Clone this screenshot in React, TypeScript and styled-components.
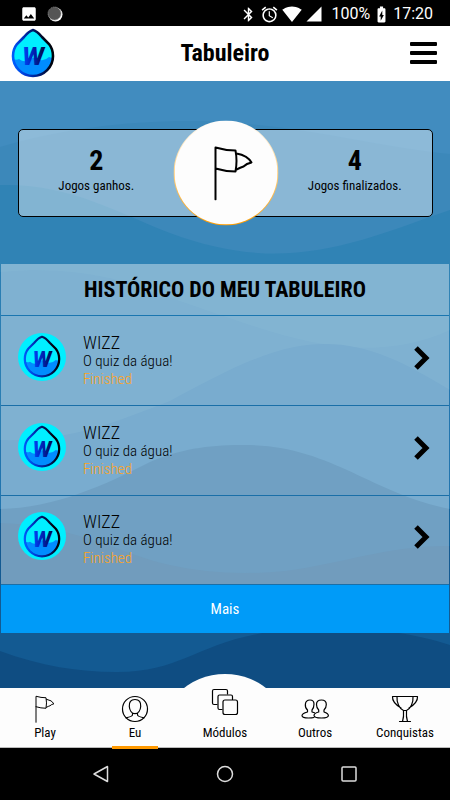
import React from "react";
import styled, { createGlobalStyle } from "styled-components";
import {
  MdAlarm,
  MdBatteryChargingFull,
  MdBluetooth,
  MdImage,
  MdSignalCellular4Bar,
  MdSignalWifi4Bar,
} from "react-icons/md";

const GlobalStyle = createGlobalStyle`
  * { box-sizing: border-box; }
  body { margin: 0; background: #000; color: #000; font-family: "Roboto Condensed", "Liberation Sans Narrow", Roboto, sans-serif; }
  button { font: inherit; color: inherit; border: 0; background: none; padding: 0; cursor: pointer; }
  a { color: inherit; text-decoration: none; }
  h1, h2, p, ul { margin: 0; padding: 0; list-style: none; }
  svg { display: block; flex: none; }
`;

const Screen = styled.div`
  min-height: 100vh;
  display: flex;
  flex-direction: column;
`;

const StatusBar = styled.div`
  display: flex;
  align-items: center;
  justify-content: space-between;
  height: 26px;
  padding: 2px 17px 0 20px;
  background: #000;
  color: #fff;
  font: 400 16px/24px Roboto, sans-serif;
`;

const StatusGroup = styled.div<{ $gap: number }>`
  display: flex;
  align-items: center;
  gap: ${(p) => p.$gap}px;
`;

const Header = styled.header`
  display: grid;
  grid-template-columns: 48px 1fr 48px;
  align-items: center;
  height: 55px;
  padding: 0 13px 2px 8px;
  background: #fff;
`;

const Title = styled.h1`
  padding-left: 5px;
  text-align: center;
  font-size: 24px;
  line-height: 28px;
  font-weight: 700;
`;

const MenuButton = styled.button`
  justify-self: end;
`;

const Main = styled.main`
  position: relative;
  flex: 1;
  background: #418cbf;
  padding-bottom: 55px;
`;

const Waves = styled.svg`
  position: absolute;
  inset: 0;
  width: 100%;
  height: 100%;
`;

const Stats = styled.section`
  position: relative;
  display: grid;
  grid-template-columns: 1fr 1fr;
  margin: 48px 17px 0 18px;
  height: 88px;
  border: 1px solid #000;
  border-radius: 5px;
  background: rgba(255, 255, 255, 0.4);
`;

const Stat = styled.div<{ $side: "left" | "right" }>`
  display: flex;
  flex-direction: column;
  align-items: center;
  padding-top: 14px;
  ${(p) => (p.$side === "left" ? "padding-right: 52px;" : "padding-left: 52px;")}
`;

const StatValue = styled.strong`
  font-size: 28px;
  line-height: 34px;
`;

const StatLabel = styled.span`
  font-size: 13px;
  line-height: 16px;
`;

const FlagBadge = styled.div`
  position: absolute;
  left: 50%;
  top: 50%;
  width: 105px;
  height: 105px;
  transform: translate(-50%, -50%);
  padding-left: 16px;
  border: 1px solid transparent;
  border-radius: 50%;
  background: linear-gradient(#fdfdfd, #fdfdfd) padding-box,
    linear-gradient(#fff, #ffcf80 50%, #ff9d00) border-box;
  display: flex;
  align-items: center;
  justify-content: center;
`;

const History = styled.section`
  position: relative;
  margin: 47px 1px 0;
`;

const HistoryTitle = styled.h2`
  height: 52px;
  border-bottom: 1px solid #1a76b0;
  background: rgba(255, 255, 255, 0.4);
  background-clip: padding-box;
  text-align: center;
  font-size: 22px;
  line-height: 52px;
  font-weight: 700;
`;

const GameRow = styled.button`
  display: flex;
  align-items: center;
  width: 100%;
  height: 90px;
  padding: 0 19px 6px 16px;
  border-bottom: 1px solid #1a6fa8;
  background: rgba(255, 255, 255, 0.4);
  background-clip: padding-box;
  text-align: left;
  li:last-child > & {
    height: 89px;
  }
`;

const Avatar = styled.span`
  display: grid;
  place-items: center;
  width: 48px;
  height: 48px;
  margin: 0 17px 2px 1px;
  border-radius: 50%;
  background: #00efff;
`;

const GameInfo = styled.span`
  display: flex;
  flex-direction: column;
  flex: 1;
  padding-top: 6px;
  font-weight: 300;
  font-size: 15px;
  line-height: 18px;
`;

const GameName = styled.span`
  font-size: 18px;
`;

const GameState = styled.span`
  color: #ffa41c;
`;

const MoreButton = styled.button`
  width: 100%;
  height: 48px;
  background: #009bf8;
  color: #fff;
  font-size: 15px;
  line-height: 48px;
`;

const Tabs = styled.nav`
  position: relative;
  display: grid;
  grid-template-columns: repeat(5, 1fr);
  height: 60px;
  background: #fdfdfd;
  border-bottom: 1px solid #bbb;
`;

const Bump = styled.span`
  position: absolute;
  left: 50%;
  top: -14px;
  width: 134px;
  height: 134px;
  margin-left: -67px;
  border-radius: 50%;
  background: #fdfdfd;
  clip-path: inset(0 0 90px 0);
`;

const Tab = styled.a<{ $active?: boolean; $raised?: boolean }>`
  position: relative;
  display: flex;
  flex-direction: column;
  align-items: center;
  justify-content: flex-end;
  gap: ${(p) => (p.$raised ? 8 : 1)}px;
  padding-bottom: 7px;
  font-size: 13px;
  line-height: 18px;
  background: ${(p) =>
    p.$active ? "linear-gradient(#f90, #f90) center bottom / 46px 3px no-repeat" : "none"};
`;

const SystemBar = styled.div`
  display: grid;
  grid-template-columns: repeat(3, 1fr);
  justify-items: center;
  align-items: center;
  height: 52px;
  padding: 0 39px;
  background: #000;
`;

const dropPath =
  "M22 2Q26 3 31 9L38 16Q42 21 42 28A20 20 0 0 1 2 28Q2 21 6 16L13 9Q18 3 22 2Z";

function Drop({ id, width, height }: { id: string; width: number; height: number }) {
  return (
    <svg width={width} height={height} viewBox="0 0 44 50" aria-hidden="true">
      <defs>
        <linearGradient id={`${id}-rim`} x1="0" x2="0.9" y1="0.7" y2="0.5">
          <stop offset="0" stopColor="#0060ff" />
          <stop offset="0.3" stopColor="#0038d0" />
          <stop offset="0.6" stopColor="#001e80" />
          <stop offset="1" stopColor="#00030c" />
        </linearGradient>
        <linearGradient id={`${id}-letter`} x1="0" x2="1">
          <stop offset="0" stopColor="#0048ff" />
          <stop offset="0.5" stopColor="#0020b0" />
          <stop offset="1" stopColor="#000a30" />
        </linearGradient>
        <clipPath id={`${id}-clip`}>
          <path d={dropPath} />
        </clipPath>
      </defs>
      <g clipPath={`url(#${id}-clip)`}>
        <rect width="44" height="50" fill="#00efff" />
        <path d="M0 30Q5 33 8 31Q13 35 18 32Q24 27 29 32Q34 33 38 29L44 31V50H0Z" fill="#008cff" />
      </g>
      <path d={dropPath} fill="none" stroke={`url(#${id}-rim)`} strokeWidth="2.600" />
      <text
        x="22"
        y="37"
        textAnchor="middle"
        fontFamily="Roboto, sans-serif"
        fontSize="26"
        fontWeight="800"
        fontStyle="italic"
        fill={`url(#${id}-letter)`}
      >
        W
      </text>
    </svg>
  );
}

function Flag({ width, height, stroke }: { width: number; height: number; stroke: number }) {
  return (
    <svg
      width={width}
      height={height}
      viewBox="0 0 40 55"
      fill="none"
      stroke="#000"
      strokeWidth={stroke}
      strokeLinejoin="round"
      strokeLinecap="round"
      aria-hidden="true"
    >
      <path d="M2 54V2Q12 5 22 5Q24 15 22 26Q12 26 2 23M23 8Q34 10 38 17Q33 18 30 21Q27 22 23 24" />
    </svg>
  );
}

const iconProps = {
  width: 28,
  height: 28,
  viewBox: "0 0 28 28",
  fill: "none",
  stroke: "#000",
  strokeWidth: 1.2,
  strokeLinejoin: "round" as const,
  strokeLinecap: "round" as const,
  "aria-hidden": true,
};

const PersonIcon = () => (
  <svg {...iconProps}>
    <circle cx="14" cy="14" r="12.500" />
    <path d="M14 4.500C9.700 4.500 8 7.300 8.300 11.500C8.600 15.500 10.800 18.700 14 18.700S19.400 15.500 19.700 11.500C20 7.300 18.300 4.500 14 4.500ZM11.500 18V20Q11.200 21.500 5 22.800M16.500 18V20Q16.800 21.500 23 22.800" />
  </svg>
);

const ModulesIcon = () => (
  <svg {...iconProps}>
    <path d="M6 16.500H3Q1.500 16.500 1.500 15V3Q1.500 1.500 3 1.500H15Q16.500 1.500 16.500 3V6" />
    <path d="M11 21.500H8.500Q7 21.500 7 20V8.500Q7 7 8.500 7H20Q21.500 7 21.500 8.500V11.500" />
    <rect x="12" y="12" width="14.500" height="14.500" rx="2" />
  </svg>
);

const PeopleIcon = () => (
  <svg {...iconProps}>
    <path d="M13 22.500Q11 23 7.500 23Q1 23 1 20.500Q1 18.500 6.500 17V15C3.500 12.500 3 5 9 5Q13 5 13 9Q13 13 11 15V17L13.500 17.800" />
    <path d="M20.500 5Q15.500 5 15.500 9.500Q15.500 13 17.700 15V17Q13 18.200 13 20.500Q13 23 20.500 23Q27.400 23 27.400 20.500Q27.400 18.500 23 17V15Q25.300 13 25.300 9.500Q25.300 5 20.500 5Z" />
  </svg>
);

const TrophyIcon = () => (
  <svg {...iconProps}>
    <path d="M6 1.500H22C22.500 8 19.500 13.500 15.500 15.500H12.500C8.500 13.500 5.500 8 6 1.500ZM6 1.500H1.500Q1 7.500 10 13M22 1.500H26.500Q27 7.500 18 13M12.500 15.500Q13 22 11.500 26.500M15.500 15.500Q15 22 16.500 26.500M8.500 26.500H19.500" />
  </svg>
);

const waves = [
  { fill: "#3c88ba", d: "M0 66C60 48 130 39 200 40C300 43 370 65 450 73V607H0Z" },
  { fill: "#3083b5", d: "M0 104C70 102 120 133 170 152C285 195 355 162 450 129V607H0Z" },
  { fill: "#2a7eb3", d: "M0 191C90 183 135 204 180 220C280 254 360 289 450 249V607H0Z" },
  { fill: "#2175af", d: "M0 359C70 361 115 341 170 320C230 288 275 263 325 263C370 263 405 282 450 309V607H0Z" },
  { fill: "#11629b", d: "M0 428C55 427 105 404 150 381C185 366 215 364 245 364C330 364 370 412 450 428V607H0Z" },
  { fill: "#135a92", d: "M0 442C80 445 125 475 170 484C205 492 245 494 285 490C345 482 390 464 450 465V607H0Z" },
  { fill: "#0f4d82", d: "M0 570C40 585 80 591 115 591C195 592 200 548 325 547C380 547 415 553 450 564V607H0Z" },
];

const games = [1, 2, 3];

export default function App() {
  return (
    <>
      <GlobalStyle />
      <Screen>
        <StatusBar>
          <StatusGroup $gap={9}>
            <MdImage size={18} />
            <svg width="16" height="16" viewBox="0 0 16 16">
              <circle cx="8.500" cy="8.500" r="7" fill="#fff" />
              <circle cx="7.500" cy="7.500" r="6.500" fill="#555" stroke="#888" strokeDasharray="1 1" />
            </svg>
          </StatusGroup>
          <StatusGroup $gap={8}>
            <StatusGroup $gap={3}>
              <MdBluetooth size={17} />
              <MdAlarm size={19} />
              <MdSignalWifi4Bar size={20} />
              <MdSignalCellular4Bar size={18} />
            </StatusGroup>
            <StatusGroup $gap={2}>
              <span>100%</span>
              <MdBatteryChargingFull size={19} />
              <span>17:20</span>
            </StatusGroup>
          </StatusGroup>
        </StatusBar>

        <Header>
          <Drop id="brand" width={50} height={50} />
          <Title>Tabuleiro</Title>
          <MenuButton aria-label="Menu">
            <svg width="27" height="22" viewBox="0 0 27 22">
              <rect y="0" width="27" height="4" rx="1" />
              <rect y="9" width="27" height="4" rx="1" />
              <rect y="18" width="27" height="4" rx="1" />
            </svg>
          </MenuButton>
        </Header>

        <Main>
          <Waves viewBox="0 0 450 607" preserveAspectRatio="none" aria-hidden="true">
            {waves.map((w) => (
              <path key={w.fill} d={w.d} fill={w.fill} />
            ))}
          </Waves>

          <Stats>
            <Stat $side="left">
              <StatValue>2</StatValue>
              <StatLabel>Jogos ganhos.</StatLabel>
            </Stat>
            <Stat $side="right">
              <StatValue>4</StatValue>
              <StatLabel>Jogos finalizados.</StatLabel>
            </Stat>
            <FlagBadge>
              <Flag width={40} height={55} stroke={2} />
            </FlagBadge>
          </Stats>

          <History>
            <HistoryTitle>HISTÓRICO DO MEU TABULEIRO</HistoryTitle>
            <ul>
              {games.map((n) => (
                <li key={n}>
                  <GameRow>
                    <Avatar>
                      <Drop id={`game-${n}`} width={38} height={43} />
                    </Avatar>
                    <GameInfo>
                      <GameName>WIZZ</GameName>
                      <span>O quiz da água!</span>
                      <GameState>Finished</GameState>
                    </GameInfo>
                    <svg width="16" height="24" viewBox="0 0 16 24">
                      <path d="M2 2L12 12L2 22" fill="none" stroke="#000" strokeWidth="5" />
                    </svg>
                  </GameRow>
                </li>
              ))}
            </ul>
            <MoreButton>Mais</MoreButton>
          </History>
        </Main>

        <Tabs>
          <Bump />
          <Tab href="#play">
            <Flag width={20} height={28} stroke={2} />
            Play
          </Tab>
          <Tab href="#eu" $active aria-current="page">
            <PersonIcon />
            Eu
          </Tab>
          <Tab href="#modulos" $raised>
            <ModulesIcon />
            Módulos
          </Tab>
          <Tab href="#outros">
            <PeopleIcon />
            Outros
          </Tab>
          <Tab href="#conquistas">
            <TrophyIcon />
            Conquistas
          </Tab>
        </Tabs>

        <SystemBar>
          <svg width="18" height="18" viewBox="0 0 18 18" fill="none" stroke="#ddd" strokeWidth="1.500" strokeLinejoin="round">
            <path d="M2 9L15.500 1.500V16.500Z" />
          </svg>
          <svg width="18" height="18" viewBox="0 0 18 18" fill="none" stroke="#ddd" strokeWidth="1.500">
            <circle cx="9" cy="9" r="7.500" />
          </svg>
          <svg width="18" height="18" viewBox="0 0 18 18" fill="none" stroke="#ddd" strokeWidth="1.500">
            <rect x="2" y="2" width="14" height="14" rx="1" />
          </svg>
        </SystemBar>
      </Screen>
    </>
  );
}
